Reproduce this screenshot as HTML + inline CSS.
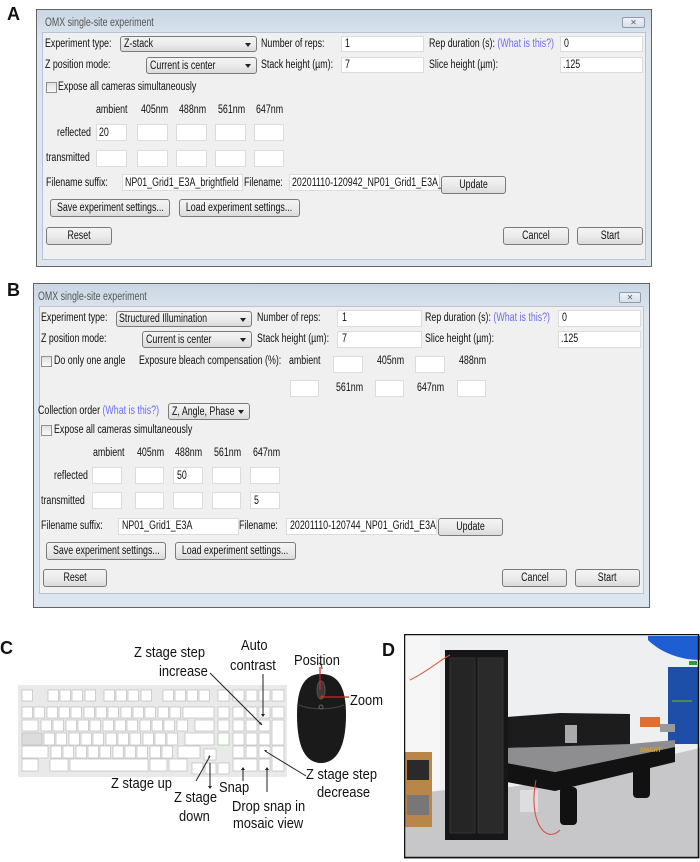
<!DOCTYPE html>
<html><head><meta charset="utf-8"><style>
*{margin:0;padding:0}
body{width:700px;height:862px;background:#fff;position:relative;overflow:hidden;font-family:"Liberation Sans",sans-serif}
.a{position:absolute}
.l{position:absolute;font-size:11.5px;line-height:12px;transform:scaleX(.77);transform-origin:0 0;white-space:nowrap;color:#111}
.blue{color:#6e6ef0}
.in{position:absolute;background:#fff;border:1px solid #dcdcdc;box-sizing:border-box}
.btn{position:absolute;box-sizing:border-box;border:1px solid #7a7a7a;border-radius:3px;background:linear-gradient(#f4f4f4,#ebebeb 50%,#dadada);font-size:11.5px;line-height:14px;color:#111;display:flex;justify-content:center;align-items:center}
.btn span{display:block;transform:scaleX(.77);white-space:nowrap;flex-shrink:0}
.sel{position:absolute;box-sizing:border-box;border:1px solid #7a7a7a;border-radius:3px;background:linear-gradient(#f4f4f4,#ebebeb 50%,#dadada)}
.sel:after{content:"";position:absolute;right:5px;top:6px;border-left:3px solid transparent;border-right:3px solid transparent;border-top:4px solid #222}
.cb{position:absolute;width:9px;height:9px;border:1px solid #8e8f8f;background:linear-gradient(#e0e0e0,#fafafa)}
.dlg{position:absolute;border:1px solid #646464;background:linear-gradient(#c9d6e4,#dde6ef 30px);box-sizing:border-box}
.cl{position:absolute;background:#f0f0f0;border:1px solid #b8c4d2;box-sizing:border-box}
.x{position:absolute;border:1px solid #8d9bad;border-radius:2px;background:linear-gradient(#eef2f7,#d8e0ea);box-sizing:border-box;font-size:8px;line-height:9px;text-align:center;color:#55606e}
.big{position:absolute;font-weight:bold;font-size:18px;line-height:20px;color:#111}
.c{position:absolute;font-size:15px;line-height:16px;transform:scaleX(.86);transform-origin:0 0;white-space:nowrap;color:#111}
</style></head><body>

<!-- PANEL A -->
<div class="big" style="left:7px;top:4px">A</div>
<div class="dlg" style="left:36px;top:9px;width:616px;height:258px"></div>
<div class="cl" style="left:42px;top:32px;width:604px;height:228px"></div>
<div class="l" style="left:45px;top:17px;color:#555">OMX single-site experiment</div>
<div class="x" style="left:622px;top:17px;width:23px;height:11px">✕</div>

<div class="l" style="left:45px;top:38px">Experiment type:</div>
<div class="sel" style="left:120px;top:36px;width:137px;height:16px"></div>
<div class="l" style="left:124px;top:38px">Z-stack</div>
<div class="l" style="left:261px;top:38px">Number of reps:</div>
<div class="in" style="left:341px;top:36px;width:83px;height:16px"></div>
<div class="l" style="left:345px;top:38px">1</div>
<div class="l" style="left:429px;top:38px">Rep duration (s): <span class="blue">(What is this?)</span></div>
<div class="in" style="left:560px;top:36px;width:83px;height:16px"></div>
<div class="l" style="left:564px;top:38px">0</div>

<div class="l" style="left:45px;top:59px">Z position mode:</div>
<div class="sel" style="left:146px;top:57px;width:111px;height:17px"></div>
<div class="l" style="left:150px;top:60px">Current is center</div>
<div class="l" style="left:261px;top:59px">Stack height (µm):</div>
<div class="in" style="left:341px;top:57px;width:83px;height:16px"></div>
<div class="l" style="left:345px;top:59px">7</div>
<div class="l" style="left:429px;top:59px">Slice height (µm):</div>
<div class="in" style="left:560px;top:57px;width:83px;height:16px"></div>
<div class="l" style="left:563px;top:59px">.125</div>

<div class="cb" style="left:46px;top:82px"></div>
<div class="l" style="left:58px;top:81px">Expose all cameras simultaneously</div>

<div class="l" style="left:96px;top:104px">ambient</div>
<div class="l" style="left:141px;top:104px">405nm</div>
<div class="l" style="left:179px;top:104px">488nm</div>
<div class="l" style="left:218px;top:104px">561nm</div>
<div class="l" style="left:256px;top:104px">647nm</div>

<div class="l" style="left:57px;top:127px">reflected</div>
<div class="in" style="left:96px;top:124px;width:31px;height:17px"></div>
<div class="l" style="left:99px;top:127px">20</div>
<div class="in" style="left:137px;top:124px;width:31px;height:17px"></div>
<div class="in" style="left:176px;top:124px;width:31px;height:17px"></div>
<div class="in" style="left:215px;top:124px;width:31px;height:17px"></div>
<div class="in" style="left:254px;top:124px;width:30px;height:17px"></div>

<div class="l" style="left:46px;top:152px">transmitted</div>
<div class="in" style="left:96px;top:150px;width:31px;height:17px"></div>
<div class="in" style="left:137px;top:150px;width:31px;height:17px"></div>
<div class="in" style="left:176px;top:150px;width:31px;height:17px"></div>
<div class="in" style="left:215px;top:150px;width:31px;height:17px"></div>
<div class="in" style="left:254px;top:150px;width:30px;height:17px"></div>

<div class="l" style="left:46px;top:177px">Filename suffix:</div>
<div class="in" style="left:122px;top:174px;width:121px;height:17px"></div>
<div class="l" style="left:125px;top:177px">NP01_Grid1_E3A_brightfield</div>
<div class="l" style="left:244px;top:177px">Filename:</div>
<div class="in" style="left:289px;top:174px;width:151px;height:17px"></div>
<div class="l" style="left:292px;top:177px">20201110-120942_NP01_Grid1_E3A_b</div>
<div class="btn" style="left:441px;top:176px;width:65px;height:18px"><span>Update</span></div>

<div class="btn" style="left:50px;top:199px;width:120px;height:18px"><span>Save experiment settings...</span></div>
<div class="btn" style="left:179px;top:199px;width:121px;height:18px"><span>Load experiment settings...</span></div>
<div class="btn" style="left:46px;top:227px;width:66px;height:18px"><span>Reset</span></div>
<div class="btn" style="left:503px;top:227px;width:66px;height:18px"><span>Cancel</span></div>
<div class="btn" style="left:577px;top:227px;width:66px;height:18px"><span>Start</span></div>

<!-- PANEL B -->
<div class="big" style="left:7px;top:280px">B</div>
<div class="dlg" style="left:33px;top:283px;width:617px;height:325px"></div>
<div class="cl" style="left:39px;top:306px;width:605px;height:288px"></div>
<div class="l" style="left:38px;top:291px;color:#555">OMX single-site experiment</div>
<div class="x" style="left:619px;top:292px;width:22px;height:11px">✕</div>

<div class="l" style="left:41px;top:312px">Experiment type:</div>
<div class="sel" style="left:116px;top:311px;width:136px;height:16px"></div>
<div class="l" style="left:119px;top:313px">Structured Illumination</div>
<div class="l" style="left:257px;top:312px">Number of reps:</div>
<div class="in" style="left:337px;top:310px;width:85px;height:17px"></div>
<div class="l" style="left:342px;top:312px">1</div>
<div class="l" style="left:425px;top:312px">Rep duration (s): <span class="blue">(What is this?)</span></div>
<div class="in" style="left:558px;top:310px;width:83px;height:17px"></div>
<div class="l" style="left:562px;top:312px">0</div>

<div class="l" style="left:41px;top:333px">Z position mode:</div>
<div class="sel" style="left:142px;top:331px;width:110px;height:17px"></div>
<div class="l" style="left:146px;top:334px">Current is center</div>
<div class="l" style="left:257px;top:333px">Stack height (µm):</div>
<div class="in" style="left:337px;top:331px;width:85px;height:17px"></div>
<div class="l" style="left:342px;top:333px">7</div>
<div class="l" style="left:425px;top:333px">Slice height (µm):</div>
<div class="in" style="left:558px;top:331px;width:83px;height:17px"></div>
<div class="l" style="left:561px;top:333px">.125</div>

<div class="cb" style="left:41px;top:356px"></div>
<div class="l" style="left:54px;top:355px">Do only one angle</div>
<div class="l" style="left:139px;top:355px">Exposure bleach compensation (%):</div>
<div class="l" style="left:289px;top:355px">ambient</div>
<div class="in" style="left:333px;top:356px;width:30px;height:17px"></div>
<div class="l" style="left:377px;top:355px">405nm</div>
<div class="in" style="left:415px;top:356px;width:30px;height:17px"></div>
<div class="l" style="left:459px;top:355px">488nm</div>
<div class="in" style="left:290px;top:380px;width:29px;height:17px"></div>
<div class="l" style="left:336px;top:382px">561nm</div>
<div class="in" style="left:375px;top:380px;width:29px;height:17px"></div>
<div class="l" style="left:417px;top:382px">647nm</div>
<div class="in" style="left:457px;top:380px;width:29px;height:17px"></div>

<div class="l" style="left:38px;top:405px">Collection order <span class="blue">(What is this?)</span></div>
<div class="sel" style="left:168px;top:403px;width:82px;height:17px"></div>
<div class="l" style="left:172px;top:406px">Z, Angle, Phase</div>
<div class="cb" style="left:41px;top:425px"></div>
<div class="l" style="left:54px;top:424px">Expose all cameras simultaneously</div>

<div class="l" style="left:93px;top:447px">ambient</div>
<div class="l" style="left:137px;top:447px">405nm</div>
<div class="l" style="left:175px;top:447px">488nm</div>
<div class="l" style="left:214px;top:447px">561nm</div>
<div class="l" style="left:253px;top:447px">647nm</div>

<div class="l" style="left:54px;top:470px">reflected</div>
<div class="in" style="left:92px;top:467px;width:30px;height:17px"></div>
<div class="in" style="left:135px;top:467px;width:29px;height:17px"></div>
<div class="in" style="left:173px;top:467px;width:30px;height:17px"></div>
<div class="l" style="left:177px;top:470px">50</div>
<div class="in" style="left:212px;top:467px;width:29px;height:17px"></div>
<div class="in" style="left:250px;top:467px;width:30px;height:17px"></div>

<div class="l" style="left:41px;top:495px">transmitted</div>
<div class="in" style="left:92px;top:492px;width:30px;height:17px"></div>
<div class="in" style="left:135px;top:492px;width:29px;height:17px"></div>
<div class="in" style="left:173px;top:492px;width:30px;height:17px"></div>
<div class="in" style="left:212px;top:492px;width:29px;height:17px"></div>
<div class="in" style="left:250px;top:492px;width:30px;height:17px"></div>
<div class="l" style="left:254px;top:495px">5</div>

<div class="l" style="left:41px;top:520px">Filename suffix:</div>
<div class="in" style="left:118px;top:518px;width:121px;height:17px"></div>
<div class="l" style="left:122px;top:520px">NP01_Grid1_E3A</div>
<div class="l" style="left:239px;top:520px">Filename:</div>
<div class="in" style="left:286px;top:518px;width:151px;height:17px"></div>
<div class="l" style="left:290px;top:520px">20201110-120744_NP01_Grid1_E3A</div>
<div class="btn" style="left:438px;top:518px;width:65px;height:18px"><span>Update</span></div>

<div class="btn" style="left:46px;top:542px;width:120px;height:18px"><span>Save experiment settings...</span></div>
<div class="btn" style="left:175px;top:542px;width:121px;height:18px"><span>Load experiment settings...</span></div>
<div class="btn" style="left:43px;top:569px;width:64px;height:18px"><span>Reset</span></div>
<div class="btn" style="left:502px;top:569px;width:65px;height:18px"><span>Cancel</span></div>
<div class="btn" style="left:575px;top:569px;width:65px;height:18px"><span>Start</span></div>

<!-- PANEL C -->
<div class="big" style="left:0px;top:638px">C</div>
<svg class="a" style="left:0;top:620px" width="400" height="242" viewBox="0 620 400 242">
<rect x="18" y="685" width="269" height="92" fill="#e9e9e9"/>
<g fill="#fff" stroke="#b5b5b5" stroke-width=".6">
<rect x="22" y="690" width="10.5" height="11"/>
<rect x="48" y="690" width="10.5" height="11"/><rect x="60" y="690" width="10.5" height="11"/><rect x="72" y="690" width="10.5" height="11"/><rect x="85" y="690" width="10.5" height="11"/>
<rect x="104" y="690" width="10.5" height="11"/><rect x="116" y="690" width="10.5" height="11"/><rect x="128" y="690" width="10.5" height="11"/><rect x="141" y="690" width="10.5" height="11"/>
<rect x="163" y="690" width="10.5" height="11"/><rect x="175" y="690" width="10.5" height="11"/><rect x="187" y="690" width="10.5" height="11"/><rect x="199" y="690" width="10.5" height="11"/>
<rect x="218" y="690" width="11" height="11"/>
<rect x="233" y="690" width="11" height="11"/><rect x="246" y="690" width="11" height="11"/><rect x="259" y="690" width="11" height="11"/><rect x="272" y="690" width="12" height="11"/>
<rect x="22" y="707" width="10.5" height="11"/><rect x="34" y="707" width="10.5" height="11"/><rect x="47" y="707" width="10.5" height="11"/><rect x="59" y="707" width="10.5" height="11"/><rect x="71" y="707" width="10.5" height="11"/><rect x="84" y="707" width="10.5" height="11"/><rect x="96" y="707" width="10.5" height="11"/><rect x="108" y="707" width="10.5" height="11"/><rect x="121" y="707" width="10.5" height="11"/><rect x="133" y="707" width="10.5" height="11"/><rect x="145" y="707" width="10.5" height="11"/><rect x="158" y="707" width="10.5" height="11"/><rect x="170" y="707" width="10.5" height="11"/>
<rect x="183" y="707" width="31" height="11"/>
<rect x="218" y="707" width="11" height="11"/>
<rect x="233" y="707" width="11" height="11"/><rect x="246" y="707" width="11" height="11"/><rect x="259" y="707" width="11" height="11"/><rect x="272" y="707" width="12" height="11"/>
<rect x="22" y="720" width="16" height="11"/>
<rect x="41" y="720" width="10.5" height="11"/><rect x="53" y="720" width="10.5" height="11"/><rect x="66" y="720" width="10.5" height="11"/><rect x="78" y="720" width="10.5" height="11"/><rect x="90" y="720" width="10.5" height="11"/><rect x="103" y="720" width="10.5" height="11"/><rect x="115" y="720" width="10.5" height="11"/><rect x="127" y="720" width="10.5" height="11"/><rect x="140" y="720" width="10.5" height="11"/><rect x="152" y="720" width="10.5" height="11"/><rect x="164" y="720" width="10.5" height="11"/><rect x="177" y="720" width="10.5" height="11"/>
<rect x="195" y="720" width="19" height="11"/>
<rect x="218" y="720" width="11" height="11"/>
<rect x="233" y="720" width="11" height="11"/><rect x="246" y="720" width="11" height="11"/><rect x="259" y="720" width="11" height="11"/><rect x="272" y="720" width="12" height="25"/>
<rect x="22" y="733" width="20" height="12" fill="#dcdcdc"/>
<rect x="44" y="733" width="10.5" height="12"/><rect x="56" y="733" width="10.5" height="12"/><rect x="69" y="733" width="10.5" height="12"/><rect x="81" y="733" width="10.5" height="12"/><rect x="93" y="733" width="10.5" height="12"/><rect x="106" y="733" width="10.5" height="12"/><rect x="118" y="733" width="10.5" height="12"/><rect x="130" y="733" width="10.5" height="12"/><rect x="143" y="733" width="10.5" height="12"/><rect x="155" y="733" width="10.5" height="12"/><rect x="167" y="733" width="10.5" height="12"/>
<rect x="185" y="733" width="29" height="12"/>
<rect x="218" y="733" width="11" height="12" stroke="#8cc08c"/>
<rect x="233" y="733" width="11" height="12"/><rect x="246" y="733" width="11" height="12"/><rect x="259" y="733" width="11" height="12"/>
<rect x="22" y="746" width="26" height="12"/>
<rect x="51" y="746" width="10.5" height="12"/><rect x="63" y="746" width="10.5" height="12"/><rect x="76" y="746" width="10.5" height="12"/><rect x="88" y="746" width="10.5" height="12"/><rect x="100" y="746" width="10.5" height="12"/><rect x="113" y="746" width="10.5" height="12"/><rect x="125" y="746" width="10.5" height="12"/><rect x="137" y="746" width="10.5" height="12"/><rect x="150" y="746" width="10.5" height="12"/><rect x="162" y="746" width="10.5" height="12"/>
<rect x="178" y="746" width="22" height="12"/>
<rect x="204" y="749" width="12" height="11"/>
<rect x="233" y="746" width="11" height="12"/><rect x="246" y="746" width="11" height="12"/><rect x="259" y="746" width="11" height="12"/><rect x="272" y="746" width="12" height="25"/>
<rect x="22" y="759" width="16" height="12"/>
<rect x="50" y="759" width="18" height="12"/>
<rect x="70" y="759" width="78" height="12"/>
<rect x="150" y="759" width="17" height="12"/>
<rect x="169" y="759" width="18" height="12"/>
<rect x="192" y="763" width="11" height="11"/><rect x="205" y="763" width="11" height="11"/><rect x="218" y="763" width="11" height="11"/>
<rect x="233" y="759" width="24" height="12"/><rect x="259" y="759" width="11" height="12"/>
</g>
<g stroke="#222" stroke-width="1" fill="none">
<line x1="210" y1="673" x2="262" y2="725"/>
<line x1="263" y1="674" x2="263" y2="716"/>
<line x1="306" y1="776" x2="265" y2="751"/>
<line x1="196" y1="781" x2="210" y2="756"/>
<line x1="210" y1="763" x2="210" y2="788"/>
<line x1="243" y1="781" x2="243" y2="768"/>
<line x1="267" y1="792" x2="267" y2="768"/>
</g>
<g fill="#222">
<path d="M262 725 l-3 -1 2 -2z"/><path d="M263 717 l-2 -3 4 0z"/><path d="M264 750 l3 0 -1 2z"/><path d="M210 755 l0 3 -2 -1z"/><path d="M210 789 l-2 -3 4 0z"/><path d="M243 767 l-2 3 4 0z"/><path d="M267 767 l-2 3 4 0z"/>
</g>
<path d="M322 669 C 322 666 321 664 319 663" stroke="#333" fill="none"/>
<path d="M321 674 C 340 674 346 690 346 715 C 346 748 336 763 321 763 C 306 763 297 748 297 715 C 297 690 303 674 321 674 Z" fill="#1a1a1a"/>
<path d="M299 705 C 310 710 332 710 344 705" stroke="#444" fill="none"/>
<ellipse cx="321" cy="690" rx="4" ry="9" fill="#3a3a3a" stroke="#555"/>
<circle cx="321" cy="707" r="2" fill="none" stroke="#666"/>
<line x1="320" y1="667" x2="320" y2="690" stroke="#d22" stroke-width="1.2"/>
<line x1="322" y1="697" x2="349" y2="697" stroke="#d22" stroke-width="1.2"/>
<circle cx="322" cy="697" r="1.6" fill="#d22"/>
</svg>
<div class="c" style="left:134px;top:645px">Z stage step</div>
<div class="c" style="left:159px;top:664px">increase</div>
<div class="c" style="left:241px;top:638px">Auto</div>
<div class="c" style="left:230px;top:658px">contrast</div>
<div class="c" style="left:294px;top:653px">Position</div>
<div class="c" style="left:350px;top:693px">Zoom</div>
<div class="c" style="left:111px;top:776px">Z stage up</div>
<div class="c" style="left:174px;top:790px">Z stage</div>
<div class="c" style="left:179px;top:809px">down</div>
<div class="c" style="left:219px;top:780px">Snap</div>
<div class="c" style="left:232px;top:799px">Drop snap in</div>
<div class="c" style="left:233px;top:816px">mosaic view</div>
<div class="c" style="left:306px;top:767px">Z stage step</div>
<div class="c" style="left:317px;top:785px">decrease</div>

<!-- PANEL D -->
<div class="big" style="left:382px;top:640px">D</div>
<svg class="a" style="left:404px;top:634px" width="296" height="225" viewBox="404 634 296 225">
<rect x="404" y="634" width="296" height="225" fill="#eeeff1"/>
<rect x="404" y="634" width="36" height="225" fill="#f6f6f6"/>
<polygon points="404,795 445,790 510,787 560,780 640,762 700,748 700,859 404,859" fill="#c7c7ca"/>
<rect x="668" y="667" width="30" height="77" fill="#1e4fa8"/>
<rect x="672" y="700" width="20" height="2" fill="#4a8a4a"/>
<path d="M648 636 L700 636 L700 660 C680 660 660 652 648 640Z" fill="#1d5fd0"/>
<rect x="689" y="661" width="8" height="4" fill="#2a9a4a"/>
<rect x="405" y="752" width="27" height="75" fill="#b9864a"/>
<rect x="407" y="760" width="22" height="20" fill="#2a2a2a"/>
<rect x="407" y="795" width="22" height="20" fill="#777"/>
<polygon points="507,717 560,713 630,714 630,745 507,748" fill="#1c1c1c"/>
<rect x="565" y="725" width="12" height="18" fill="#aaa"/>
<rect x="640" y="717" width="20" height="10" fill="#e56d2c"/>
<rect x="660" y="724" width="15" height="8" fill="#9a9a9a"/>
<polygon points="507,748 630,744 675,740 675,747 555,772 507,763" fill="#8e8e90"/>
<polygon points="507,763 555,772 675,747 675,762 555,791 507,782" fill="#121212"/>
<text x="640" y="752" font-size="6" font-weight="bold" fill="#e0a020" font-family="Liberation Sans,sans-serif">SMART</text>
<rect x="633" y="762" width="17" height="36" rx="4" fill="#111"/>
<rect x="560" y="787" width="17" height="38" rx="4" fill="#111"/>
<rect x="520" y="790" width="18" height="22" fill="#ddd"/>
<rect x="445" y="650" width="63" height="190" fill="#161616"/>
<rect x="450" y="658" width="25" height="175" fill="#252525" stroke="#333"/>
<rect x="478" y="658" width="25" height="175" fill="#2a2a2a" stroke="#333"/>
<path d="M410 680 C430 670 440 660 450 655" stroke="#d65a3a" fill="none"/>
<path d="M536 780 C528 820 545 845 560 830" stroke="#d44" fill="none"/>
<rect x="404.5" y="634.5" width="294" height="223" fill="none" stroke="#111" stroke-width="1.5"/>
</svg>
</body></html>
